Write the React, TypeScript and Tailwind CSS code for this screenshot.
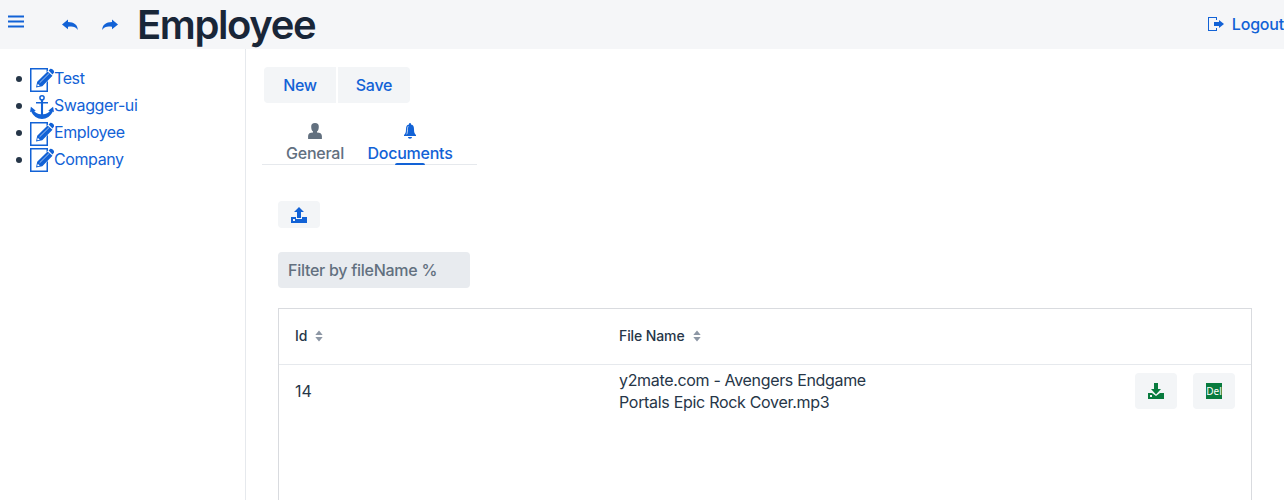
import React from "react";

type IconProps = { className?: string };

const Svg = ({ className = "size-4", children }: React.PropsWithChildren<IconProps>) => (
  <svg viewBox="0 0 16 16" fill="currentColor" className={`block shrink-0 ${className}`}>
    {children}
  </svg>
);

const MenuIcon = () => (
  <Svg>
    <path d="M0 1.500h16v2H0zM0 6.500h16v2H0zM0 11.500h16v2H0z" />
  </Svg>
);

const ReplyPath = "M6 2.500L0 7.500l6 4.800V9.700c4-.6 7.500-.6 9.700 3.300C16 8 12 5 6 5z";

const UndoIcon = () => (
  <Svg>
    <path d={ReplyPath} />
  </Svg>
);

const RedoIcon = () => (
  <Svg>
    <path d={ReplyPath} transform="matrix(-1 0 0 1 16 0)" />
  </Svg>
);

const SignOutIcon = () => (
  <Svg>
    <path d="M9 4V1H0v14h9v-3H8v2H1V2h7v2z" />
    <path d="M16 8l-5-4v2H6v4h5v2z" />
  </Svg>
);

const EditIcon = ({ className }: IconProps) => (
  <Svg className={className}>
    <path d="M0 0h12v16H0zM1 1v14h10V1z" fillRule="evenodd" />
    <path d="M12.800 1L4.500 8.900 3.400 13.600l5.200-1.500 7.600-7.900z" fill="white" />
    <path d="M11.700 2.300L4.800 9.100 4 13l4.200-.9 6.800-6.900zM12.400 1.600l1-.9c1-.9 3.400 1.500 2.500 2.500l-.9 1.200z" />
    <path d="M6.400 9.900l6.400-6.300" stroke="white" strokeWidth=".4" />
    <path d="M5.200 10.500l1.300 1.300-1.300.4-.4-.4z" fill="white" />
  </Svg>
);

const AnchorIcon = ({ className }: IconProps) => (
  <Svg className={className}>
    <circle cx="8" cy="1.900" r="1.400" fill="none" stroke="currentColor" />
    <path d="M7.300 3.300h1.400v1.300H12v1H8.700v7.300c2-.2 3.700-.9 4.500-2.200l-1.100-.2L15.400 7.800l.6 3.700-.8-.5C14 14 11 16 8 16S2 14 .8 11l-.8.500L.600 7.800l3.300 2.700-1.100.2c.8 1.300 2.500 2 4.500 2.200V5.600H4v-1h3.300z" />
  </Svg>
);

const UserIcon = () => (
  <Svg>
    <path d="M8 0C5.300 0 4.200 1.200 4.200 3.800c0 2.300.6 3.900 1.800 4.800v.9c-3 .2-4.900.9-4.900 3.600V16h13.800v-2.900c0-2.700-1.900-3.400-4.900-3.600v-.9c1.200-.9 1.800-2.500 1.800-4.800C11.800 1.200 10.700 0 8 0z" />
  </Svg>
);

const BellIcon = () => (
  <Svg>
    <path d="M7 1a1 1 0 012 0v.6c2.400.5 3 2.300 3 4.400 0 3.400.5 4.900 2 6v1H2v-1c1.500-1.100 2-2.600 2-6 0-2.100.6-3.900 3-4.400zM6 14h4c0 1-.8 1.700-2 1.700S6 15 6 14z" />
    <path d="M6.400 3.200c-.9.700-.9 2-.9 3.300 0 2.400-.2 3.700-.8 4.800" fill="none" stroke="white" strokeWidth=".7" />
  </Svg>
);

const UploadIcon = () => (
  <Svg>
    <path d="M0 10h5v2h6v-2h5v6H0zM2 12v2h2v-2z" fillRule="evenodd" />
    <path d="M8 0L3 5h3v6h4V5h3z" />
  </Svg>
);

const DownloadIcon = () => (
  <Svg>
    <path d="M0 10h4l4 3 4-3h4v6H0zM2 12v2h2v-2z" fillRule="evenodd" />
    <path d="M6 0h4v6h3l-5 5.500L3 6h3z" />
  </Svg>
);

const Sorter = () => (
  <svg viewBox="0 0 8 12" className="block h-3 w-2" fill="#8d97a5">
    <path d="M4 .5L7.700 5H.3zM.3 7h7.400L4 11.500z" />
  </svg>
);

const links = [
  { label: "Test", Icon: EditIcon },
  { label: "Swagger-ui", Icon: AnchorIcon },
  { label: "Employee", Icon: EditIcon },
  { label: "Company", Icon: EditIcon },
];

export default function App() {
  return (
    <div className="flex h-[500px] w-[1284px] flex-col overflow-hidden bg-white font-['Inter','Liberation_Sans',sans-serif] text-base text-[#263648]">
      <header className="flex h-[49px] shrink-0 items-center bg-[#f5f6f8] text-[#1262d6]">
        <button className="ml-2 -mt-1.5"><MenuIcon /></button>
        <button className="ml-[38px]"><UndoIcon /></button>
        <button className="ml-6"><RedoIcon /></button>
        <h1 className="ml-[19px] text-[40px] leading-[48px] font-semibold tracking-[-1.4px] text-[#192638]">Employee</h1>
        <a className="ml-auto flex items-center gap-2 pb-0.5 font-medium tracking-[-0.2px]">
          <SignOutIcon />
          <span className="whitespace-nowrap">Logout</span>
        </a>
      </header>
      <div className="flex min-h-0 flex-1">
        <nav className="w-[246px] shrink-0 border-r border-[#e6e9ed] pt-[17px]">
          <ul>
            {links.map(({ label, Icon }) => (
              <li key={label} className="flex h-[26.750px] items-center">
                <span className="ml-4 size-[6px] rounded-full bg-[#263648]" />
                <a className="ml-2 flex items-center text-[#1262d6]">
                  <Icon className="mt-[1.500px] size-6" />
                  <span className="pb-0.5 tracking-[-0.4px]">{label}</span>
                </a>
              </li>
            ))}
          </ul>
        </nav>
        <main className="flex flex-1 flex-col items-start">
          <div className="mt-[18px] ml-[18px] flex gap-0.5 font-medium text-[#1262d6]">
            <button className="h-9 w-[72px] rounded-l bg-[#f3f5f7] tracking-[-0.3px]">New</button>
            <button className="h-9 w-[72px] rounded-r bg-[#f3f5f7] tracking-[-0.2px]">Save</button>
          </div>
          <div className="mt-[11px] ml-4 flex h-[51px] w-[215px] shrink-0 border-b border-[#e6e9ed] pl-6 font-medium">
            <div className="flex w-[58px] flex-col items-center pt-[9px] text-[#62707f]">
              <UserIcon />
              <span className="mt-0.5 leading-6 tracking-[-0.25px]">General</span>
            </div>
            <div className="ml-6 flex w-[84px] flex-col items-center pt-[9px] text-[#1262d6]">
              <BellIcon />
              <span className="mt-0.5 leading-6 tracking-[-0.25px]">Documents</span>
              <span className="-mt-0.5 h-0.5 w-[30px] shrink-0 rounded-t bg-[#1262d6]" />
            </div>
          </div>
          <button className="mt-9 ml-8 flex h-[27px] w-[42px] shrink-0 items-center justify-center rounded bg-[#f3f5f7] pt-px text-[#1262d6]">
            <UploadIcon />
          </button>
          <input
            className="mt-6 ml-8 h-9 w-48 shrink-0 rounded bg-[#e8ebef] px-2.5 font-medium tracking-[-0.27px] placeholder:text-[#62707f]"
            placeholder="Filter by fileName %"
          />
          <section className="mt-5 ml-8 h-[220px] w-[974px] shrink-0 border border-[#d9dbdf]">
            <div className="flex h-14 items-center border-b border-[#e6e9ed] pb-px pl-4 text-sm font-medium">
              <div className="flex w-[324px] items-center gap-2"><span>Id</span><Sorter /></div>
              <div className="flex items-center gap-2"><span className="tracking-[-0.1px]">File Name</span><Sorter /></div>
            </div>
            <div className="flex h-[52px] items-center pr-4 pl-4">
              <span className="w-[324px]">14</span>
              <p className="w-[292px] leading-[22px] tracking-[-0.33px]">
                y2mate.com - Avengers Endgame<br />
                <span className="tracking-[-0.3px]">Portals Epic Rock Cover.mp3</span>
              </p>
              <button className="ml-auto flex h-9 w-[42px] items-center justify-center rounded bg-[#f3f5f7] text-[#087b3e]">
                <DownloadIcon />
              </button>
              <button className="ml-4 flex h-9 w-[42px] items-center justify-center rounded bg-[#f3f5f7]">
                <span className="flex size-4 items-center justify-center overflow-hidden bg-[#087b3e] font-['Noto_Sans',sans-serif] text-[10px] leading-4 text-white">Del</span>
              </button>
            </div>
          </section>
        </main>
      </div>
    </div>
  );
}
